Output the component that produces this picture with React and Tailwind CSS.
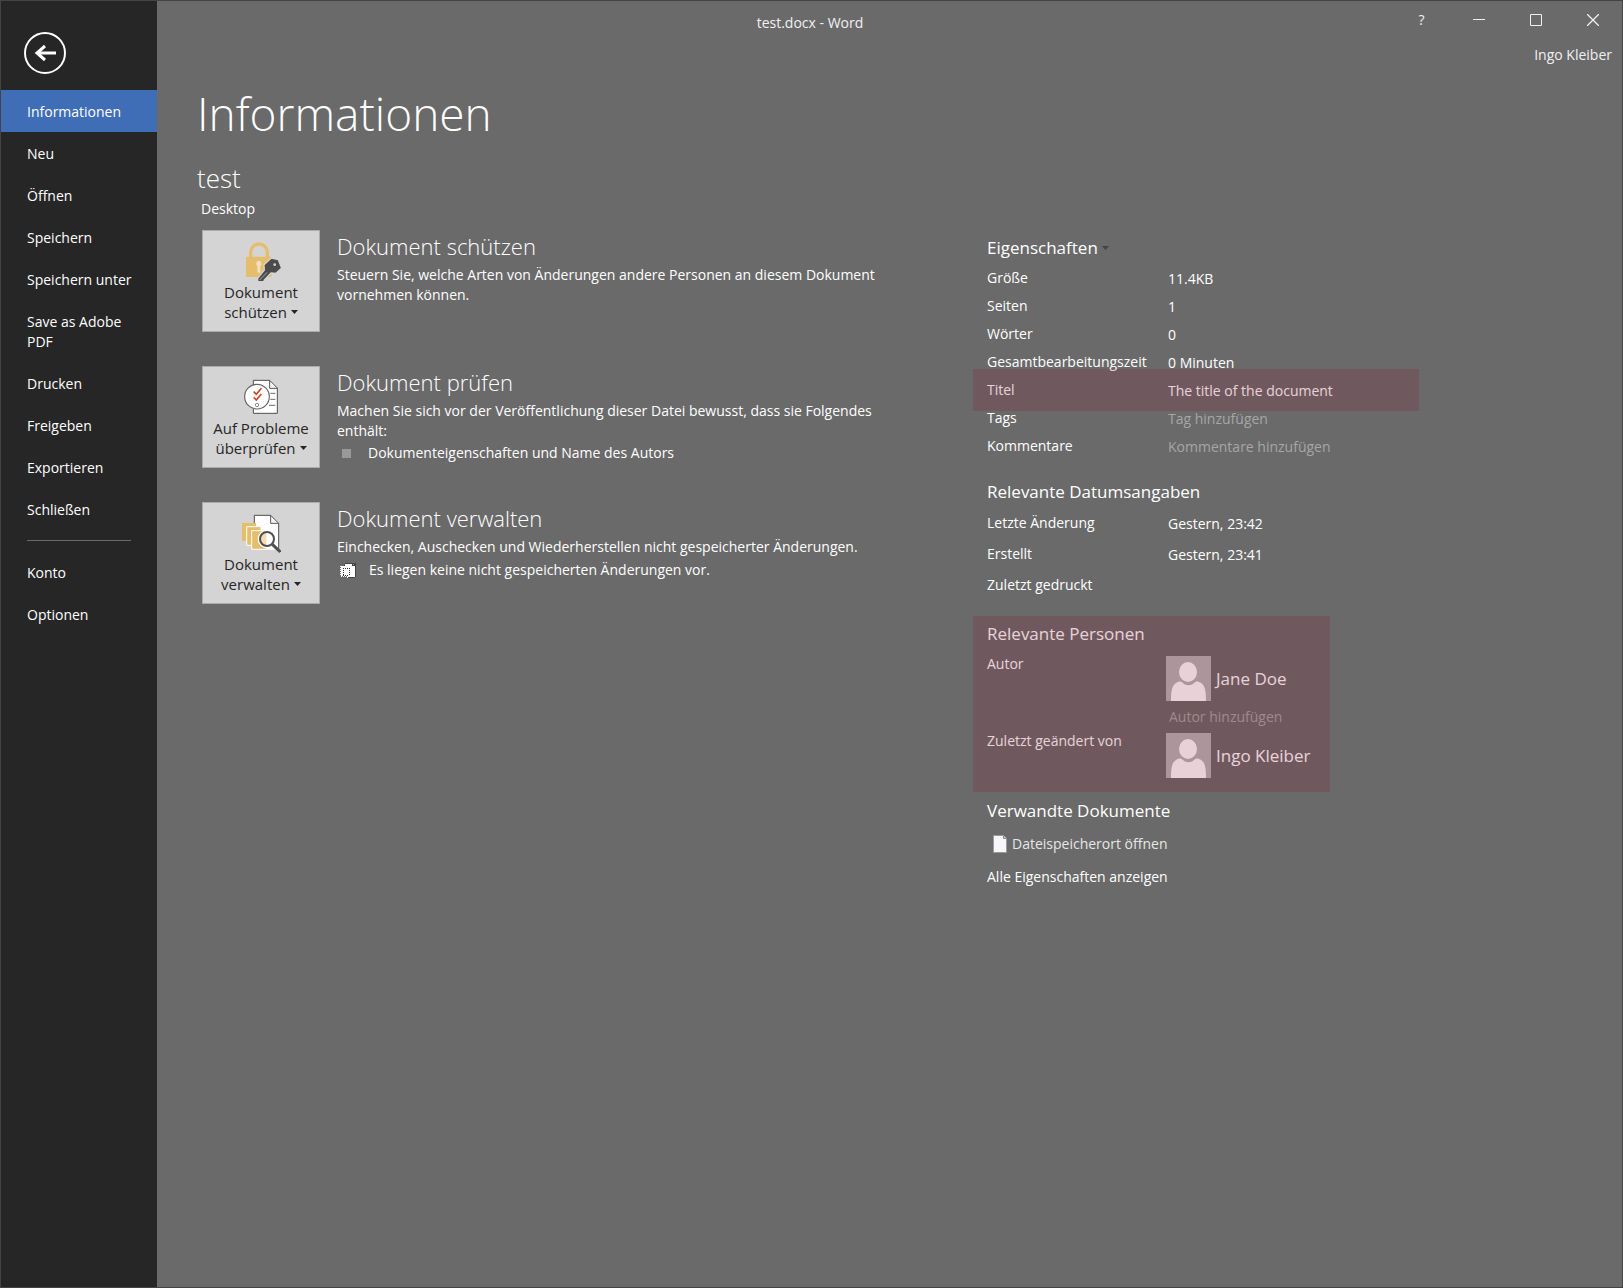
import React from "react";

const NAV = ["Informationen", "Neu", "Öffnen", "Speichern", "Speichern unter", "Save as Adobe PDF", "Drucken", "Freigeben", "Exportieren", "Schließen"];
const NAV_BOTTOM = ["Konto", "Optionen"];

function LockKeyIcon() {
  return (
    <svg viewBox="138 66 120 120" className="size-10" aria-hidden="true">
      <path d="M167 112V97a25 25 0 0 1 50 0V112" fill="none" stroke="#e6bd6b" strokeWidth="10" />
      <rect x="153" y="110" width="77" height="61" rx="3" fill="#e6bd6b" />
      <path d="M191 122a9 9 0 0 1 5 16v20h-9v-20a9 9 0 0 1 4-16Z" fill="#f0dfc0" />
      <path
        d="M229 114 250 119 260 144 243 160 228 159 208 180 206 185H188V175L208 150 207 134Z"
        fill="#4b4b4b"
        stroke="#d4d4d4"
        strokeWidth="4"
        strokeLinejoin="round"
      />
      <path d="m194 180 22-23" stroke="#d4d4d4" strokeWidth="2" />
      <circle cx="239" cy="134" r="4" fill="#d4d4d4" />
    </svg>
  );
}

function InspectIcon() {
  return (
    <svg viewBox="138 54 120 120" className="size-10" aria-hidden="true">
      <path d="M175 61h49l23 23v76h-72Z" fill="#fff" stroke="#4f4f4f" strokeWidth="3" />
      <path d="M224 61v24h23" fill="none" stroke="#4f4f4f" strokeWidth="3" />
      <path d="M226 100h15M226 118h15M222 136h19" stroke="#6b6b6b" strokeWidth="3" />
      <circle cx="186" cy="110" r="37" fill="#fff" stroke="#666" strokeWidth="3.5" />
      <path d="m176 95 8 8 15-18M176 112l8 8 15-18" fill="none" stroke="#d04425" strokeWidth="5" />
      <circle cx="186" cy="135" r="5" fill="none" stroke="#777" strokeWidth="2.5" />
    </svg>
  );
}

function VersionsIcon() {
  return (
    <svg viewBox="138 57 120 120" className="size-10" aria-hidden="true">
      <path d="M178 61h49l24 24v79h-73Z" fill="#fff" />
      <path d="M178 86V61h49l24 24v79" fill="none" stroke="#4f4f4f" strokeWidth="3" />
      <path d="M227 61v24h24" fill="none" stroke="#4f4f4f" strokeWidth="3" />
      <path d="M141 84h42v54h-42Z" fill="#e6bd6b" />
      <path d="M155 95h43v56h-43Z" fill="#e6bd6b" stroke="#fff" strokeWidth="3" />
      <path d="M170 107h44v56h-44Z" fill="#e6bd6b" stroke="#fff" strokeWidth="3" />
      <circle cx="216" cy="132" r="28" fill="#fff" />
      <path d="M214 109a23 23 0 0 0-20 23 23 23 0 0 0 20 23Z" fill="#f3deb4" />
      <circle cx="216" cy="132" r="21" fill="none" stroke="#4f4f4f" strokeWidth="6" />
      <path d="m232 148 24 23" stroke="#4f4f4f" strokeWidth="9" />
    </svg>
  );
}

function DraftsIcon() {
  return (
    <svg viewBox="0 0 16 15" className="h-[15px] w-4 shrink-0" aria-hidden="true">
      <path d="M4 0h9l3 3v12H7v-2H1V3h3Z" fill="#fff" />
      <path d="M4.500 3V.5h8M15.500 3v11.500H8" fill="none" stroke="#444" />
      <path d="M12 0h4v4h-1V3h-3Z" fill="#444" />
      <path d="M13 1v1h1Z" fill="#fff" />
      <path d="M.5 3v10M1 13.500h6" fill="none" stroke="#fff" strokeDasharray="1 1" />
      <path d="M3 5.500h7M3.500 5v8M9.500 5v8M3 12.500h6" fill="none" stroke="#333" strokeDasharray="1 1" />
    </svg>
  );
}

function Caret({ className }) {
  return (
    <svg viewBox="0 0 7 4" className={className} fill="currentColor" aria-hidden="true">
      <path d="M0 0h7L3.500 4Z" />
    </svg>
  );
}

function Avatar() {
  return (
    <svg viewBox="0 0 45 45" className="size-[45px] shrink-0" aria-hidden="true">
      <rect width="45" height="45" fill="#b5b5b5" />
      <ellipse cx="22" cy="16" rx="9" ry="10" fill="#fff" />
      <path d="M5 45c0-11 1-17 7-19 2-1 4 0 5 1 3 3 8 3 11 0 1-1 3-2 5-1 6 2 7 8 7 19Z" fill="#fff" />
    </svg>
  );
}

function Tile({ icon, first, second }) {
  return (
    <button type="button" className="flex h-[102px] w-[118px] shrink-0 flex-col items-center border border-[#ababab] bg-[#d4d4d4] pt-[11px] text-[15px] font-medium leading-5 text-[#262626]">
      {icon}
      <span>{first}</span>
      <span className="flex items-center gap-1">
        {second}
        <Caret className="h-1 w-[7px]" />
      </span>
    </button>
  );
}

function Section({ icon, first, second, title, children }) {
  return (
    <section className="flex gap-[17px]">
      <Tile icon={icon} first={first} second={second} />
      <div className="min-w-0">
        <h3 className="mb-[3px] text-[22px] font-light leading-8">{title}</h3>
        {children}
      </div>
    </section>
  );
}

function Row({ label, id, children, className }) {
  return (
    <div className={`grid grid-cols-[181px_1fr] ${className}`}>
      {id ? <label htmlFor={id}>{label}</label> : <span>{label}</span>}
      <div className="pt-px">{children}</div>
    </div>
  );
}

const FIELD = "block h-5 w-full bg-transparent leading-5 outline-none placeholder:text-[#a6a6a6] placeholder:opacity-100";
const TINT = "pointer-events-none absolute bg-[#8a0f2d]/19";

export default function App() {
  return (
    <div className="flex min-h-screen border border-[#444] bg-[#6a6a6a] font-['Open_Sans','Noto_Sans',sans-serif] text-[14px] leading-5 text-white">
      <nav className="w-[156px] shrink-0 bg-[#262626]">
        <button type="button" aria-label="Zurück" className="mt-[31px] mb-4 ml-[23px] block size-[42px]">
          <svg viewBox="0 0 42 42" fill="none" stroke="#fff" aria-hidden="true">
            <circle cx="21" cy="21" r="20" strokeWidth="2" />
            <path d="M32 21H13" strokeWidth="3" />
            <path d="m21 14-8 7 8 7" strokeWidth="3" />
          </svg>
        </button>
        {NAV.map((item, i) => (
          <a key={item} href="#" className={`block pt-3 pr-4 pb-[10px] pl-[26px] ${i === 0 ? "bg-[#3f6db6]" : ""}`}>
            {item}
          </a>
        ))}
        <hr className="mt-[10px] mr-[26px] mb-[10px] ml-[26px] border-[#6a6a6a]" />
        {NAV_BOTTOM.map((item) => (
          <a key={item} href="#" className="block pt-3 pr-4 pb-[10px] pl-[26px]">
            {item}
          </a>
        ))}
      </nav>

      <div className="min-w-0 flex-1">
        <header className="text-[#f0f0f0]">
          <div className="flex h-[38px] items-center pr-px">
            <div className="flex-1 pt-[6px] pl-[70px] text-center">test.docx - Word</div>
            <button type="button" aria-label="Hilfe" className="w-[57px] text-center">?</button>
            <button type="button" aria-label="Minimieren" className="flex w-[57px] justify-center">
              <svg viewBox="0 0 12 12" className="size-3" stroke="currentColor"><path d="M0 5.500h12" /></svg>
            </button>
            <button type="button" aria-label="Maximieren" className="flex w-[57px] justify-center">
              <svg viewBox="0 0 12 12" className="size-3" fill="none" stroke="currentColor"><path d="M.5.5h11v11H.5Z" /></svg>
            </button>
            <button type="button" aria-label="Schließen" className="flex w-[57px] justify-center">
              <svg viewBox="0 0 12 12" className="size-3" fill="none" stroke="currentColor" strokeWidth="1.300"><path d="m0 0 12 12M12 0 0 12" /></svg>
            </button>
          </div>
          <div className="pt-[6px] pr-[10px] text-right">Ingo Kleiber</div>
        </header>

        <main className="pl-10">
          <h1 className="mt-4 text-[46px] font-light leading-[64px]">Informationen</h1>
          <h2 className="mt-[15px] text-[26px] font-light leading-9">test</h2>
          <p className="mt-[3px] pl-1">Desktop</p>

          <div className="mt-[11px] flex pl-[5px]">
            <div className="flex w-[771px] flex-col gap-[34px] pr-[90px]">
              <Section icon={<LockKeyIcon />} first="Dokument" second="schützen" title="Dokument schützen">
                <p>Steuern Sie, welche Arten von Änderungen andere Personen an diesem Dokument vornehmen können.</p>
              </Section>
              <Section icon={<InspectIcon />} first="Auf Probleme" second="überprüfen" title="Dokument prüfen">
                <p>Machen Sie sich vor der Veröffentlichung dieser Datei bewusst, dass sie Folgendes enthält:</p>
                <ul>
                  <li className="mt-[2px] flex items-center gap-[17px] pl-[5px]">
                    <span className="size-[9px] bg-[#999]" />
                    Dokumenteigenschaften und Name des Autors
                  </li>
                </ul>
              </Section>
              <Section icon={<VersionsIcon />} first="Dokument" second="verwalten" title="Dokument verwalten">
                <p>Einchecken, Auschecken und Wiederherstellen nicht gespeicherter Änderungen.</p>
                <p className="mt-[3px] flex items-center gap-[13px] pl-[3px]">
                  <DraftsIcon />
                  Es liegen keine nicht gespeicherten Änderungen vor.
                </p>
              </Section>
            </div>

            <aside className="w-[446px]">
              <section className="relative pt-1 pl-[14px]">
                <h3>
                  <button type="button" className="flex items-center gap-1 text-[17px] leading-7">
                    Eigenschaften
                    <Caret className="h-1 w-[7px] text-[#444]" />
                  </button>
                </h3>
                <div className="mt-[6px]">
                  <Row className="h-7" label="Größe">11.4KB</Row>
                  <Row className="h-7" label="Seiten">1</Row>
                  <Row className="h-7" label="Wörter">0</Row>
                  <Row className="h-7" label="Gesamtbearbeitungszeit">0 Minuten</Row>
                  <div className="relative">
                    <Row className="h-7" label="Titel" id="titel">
                      <input id="titel" className={FIELD} defaultValue="The title of the document" />
                    </Row>
                    <div className={`${TINT} -top-[11px] right-0 -left-[14px] h-[42px]`} />
                  </div>
                  <Row className="h-7" label="Tags" id="tags">
                    <input id="tags" className={FIELD} placeholder="Tag hinzufügen" />
                  </Row>
                  <Row className="h-7" label="Kommentare" id="kommentare">
                    <input id="kommentare" className={FIELD} placeholder="Kommentare hinzufügen" />
                  </Row>
                </div>
              </section>

              <section className="mt-[14px] pl-[14px]">
                <h3 className="mb-[7px] text-[17px] leading-7">Relevante Datumsangaben</h3>
                <Row className="h-[31px]" label="Letzte Änderung">Gestern, 23:42</Row>
                <Row className="h-[31px]" label="Erstellt">Gestern, 23:41</Row>
                <Row className="h-[31px]" label="Zuletzt gedruckt" />
              </section>

              <section className="relative mt-[10px] w-[357px] pt-1 pb-[14px] pl-[14px]">
                <h3 className="text-[17px] leading-7">Relevante Personen</h3>
                <div className="mt-[6px] grid grid-cols-[179px_1fr]">
                  <label htmlFor="autor">Autor</label>
                  <div className="mt-[2px]">
                    <div className="flex items-center gap-[5px] text-[17px]">
                      <Avatar />
                      Jane Doe
                    </div>
                    <input id="autor" className={`${FIELD} mt-[6px] mb-1 pl-[3px]`} placeholder="Autor hinzufügen" />
                  </div>
                  <span>Zuletzt geändert von</span>
                  <div className="mt-[2px] flex items-center gap-[5px] text-[17px]">
                    <Avatar />
                    Ingo Kleiber
                  </div>
                </div>
                <div className={`${TINT} inset-0`} />
              </section>

              <section className="mt-[5px] pl-[14px]">
                <h3 className="text-[17px] leading-7">Verwandte Dokumente</h3>
                <a href="#" className="mt-[9px] flex items-center gap-[5px] pl-[6px] text-[#e6e6e6]">
                  <svg viewBox="0 0 14 18" className="h-[18px] w-[14px]" aria-hidden="true">
                    <path d="M.5.5h10l3 3v14H.5Z" fill="#f7f7fa" stroke="#999" />
                    <path d="M10.500.5v3h3" fill="#ccc" stroke="#888" />
                  </svg>
                  Dateispeicherort öffnen
                </a>
                <a href="#" className="mt-[13px] block">Alle Eigenschaften anzeigen</a>
              </section>
            </aside>
          </div>
        </main>
      </div>
    </div>
  );
}
